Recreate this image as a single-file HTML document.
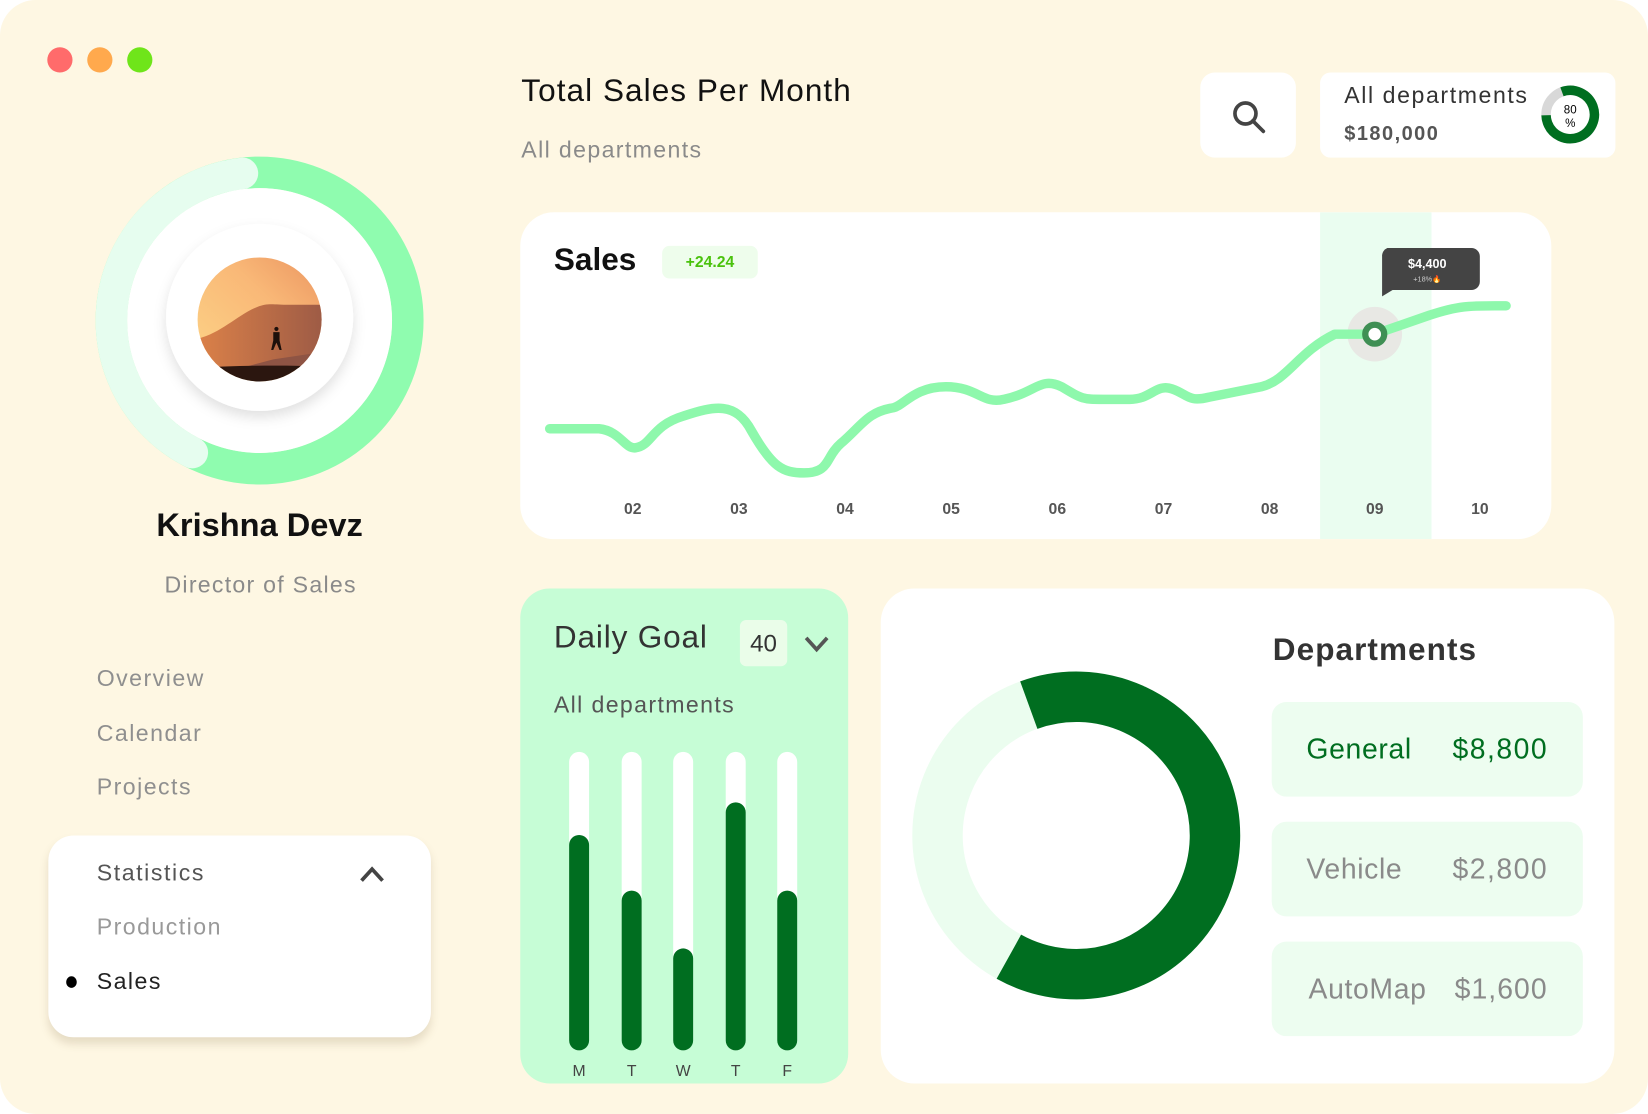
<!DOCTYPE html>
<html><head><meta charset="utf-8"><style>
html,body{margin:0;padding:0;width:1648px;height:1114px;overflow:hidden;background:#fff;font-family:"Liberation Sans",sans-serif}
#s{position:absolute;left:0;top:0;width:1568px;height:1060px;transform:scale(1.05102,1.0509);transform-origin:0 0;background:#fef7e3;border-radius:34px;overflow:hidden}
.a{position:absolute}
.t{position:absolute;white-space:nowrap}
.card{position:absolute;background:#fff}
</style></head><body><div id="s">
<div class="a" style="left:45px;top:45px;width:24px;height:24px;border-radius:50%;background:#ff6b6b"></div>
<div class="a" style="left:83px;top:45px;width:24px;height:24px;border-radius:50%;background:#ffa94d"></div>
<div class="a" style="left:121px;top:45px;width:24px;height:24px;border-radius:50%;background:#6fe51a"></div>

<svg class="a" style="left:0;top:0" width="500" height="500">
<circle cx="247" cy="305" r="141" fill="none" stroke="#8ffcaf" stroke-width="30"/>
<circle cx="247" cy="305" r="141" fill="none" stroke="#e6fdef" stroke-width="30" stroke-dasharray="360 900" stroke-linecap="round" transform="rotate(117 247 305) " />
<circle cx="247" cy="305" r="126" fill="#fff"/>
<defs><filter id="sh" x="-30%" y="-30%" width="160%" height="160%"><feDropShadow dx="0" dy="6" stdDeviation="6" flood-color="#000" flood-opacity="0.12"/></filter>
<linearGradient id="sky" x1="0" y1="1" x2="1" y2="0"><stop offset="0" stop-color="#fdd98a"/><stop offset=".6" stop-color="#f9b877"/><stop offset="1" stop-color="#e88e5c"/></linearGradient>
<linearGradient id="mt" x1="0" y1="0" x2="1" y2="0"><stop offset="0" stop-color="#dd8249"/><stop offset="1" stop-color="#9c5a45"/></linearGradient>
<clipPath id="cp"><circle cx="247" cy="304" r="59"/></clipPath></defs>
<circle cx="247" cy="302" r="89" fill="#fff" filter="url(#sh)"/>
<g clip-path="url(#cp)">
<rect x="180" y="240" width="140" height="130" fill="url(#sky)"/>
<path d="M185 323 C210 318 225 300 245 292 C255 288 260 290 275 290 L310 290 L310 350 L185 350Z" fill="url(#mt)"/>
<path d="M230 350 L260 342 L300 336 L310 338 L310 350Z" fill="#8e5444"/>
<path d="M185 350 C220 348 270 347 310 349 L310 370 L185 370Z" fill="#2b160f"/>
<circle cx="263" cy="313" r="2" fill="#1e100b"/>
<path d="M260 316 h6 v8 l2 9 h-2 l-3 -7 -3 7 h-2 l2 -9Z" fill="#1e100b"/>
</g>
</svg>
<div class="t" style="left:0;width:494px;text-align:center;top:482px;font-size:31px;font-weight:bold;color:#111">Krishna Devz</div>
<div class="t" style="left:0;width:496px;text-align:center;top:544px;font-size:22px;color:#8a8a8a;letter-spacing:1.2px">Director of Sales</div>
<div class="t" style="left:92px;top:633px;font-size:22px;color:#8f8f8f;letter-spacing:1.4px">Overview</div>
<div class="t" style="left:92px;top:685px;font-size:22px;color:#8f8f8f;letter-spacing:1.4px">Calendar</div>
<div class="t" style="left:92px;top:736px;font-size:22px;color:#8f8f8f;letter-spacing:1.4px">Projects</div>
<div class="card" style="left:46px;top:795px;width:364px;height:192px;border-radius:24px;box-shadow:0 6px 8px rgba(120,100,60,.18)"></div>
<div class="t" style="left:92px;top:818px;font-size:22px;color:#555;letter-spacing:1.5px">Statistics</div>
<svg class="a" style="left:340px;top:820px" width="28" height="22"><path d="M4 18 L14 7 L24 18" fill="none" stroke="#444" stroke-width="3.5"/></svg>
<div class="t" style="left:92px;top:869px;font-size:22px;color:#999;letter-spacing:1.4px">Production</div>
<div class="a" style="left:63px;top:929px;width:10px;height:11px;border-radius:50%;background:#000"></div>
<div class="t" style="left:92px;top:921px;font-size:22px;color:#222;letter-spacing:1.4px">Sales</div>

<div class="t" style="left:496px;top:70px;font-size:30px;color:#111;letter-spacing:1px">Total Sales Per Month</div>
<div class="t" style="left:496px;top:130px;font-size:22px;color:#8a8a8a;letter-spacing:1.3px">All departments</div>
<div class="card" style="left:1142px;top:69px;width:91px;height:81px;border-radius:14px"></div>
<svg class="a" style="left:1168px;top:92px" width="40" height="40"><circle cx="17" cy="16" r="10" fill="none" stroke="#444" stroke-width="3.5"/><path d="M24 23 L34 33" stroke="#444" stroke-width="3.5" stroke-linecap="round"/></svg>
<div class="card" style="left:1256px;top:69px;width:281px;height:81px;border-radius:10px"></div>
<div class="t" style="left:1279px;top:78px;font-size:22px;color:#333;letter-spacing:1.5px">All departments</div>
<div class="t" style="left:1279px;top:117px;font-size:19px;font-weight:bold;color:#555;letter-spacing:1.4px">$180,000</div>
<svg class="a" style="left:1464px;top:79px" width="60" height="60"><circle cx="30" cy="30" r="23" fill="none" stroke="#d8d8d8" stroke-width="9"/><circle cx="30" cy="30" r="23" fill="none" stroke="#006e20" stroke-width="9" stroke-dasharray="115.6 200" transform="rotate(-110 30 30)"/>
<text x="30" y="29" font-size="11" text-anchor="middle" font-family="Liberation Sans">80</text><text x="30" y="42" font-size="11" text-anchor="middle" font-family="Liberation Sans">%</text></svg>

<div class="card" style="left:495px;top:202px;width:981px;height:311px;border-radius:32px;overflow:hidden">
<div class="a" style="left:761px;top:0;width:106px;height:311px;background:#eafdf0"></div>
</div>
<div class="t" style="left:527px;top:231px;font-size:30px;font-weight:bold;color:#111">Sales</div>
<div class="a" style="left:630px;top:234px;width:91px;height:31px;border-radius:7px;background:#eefdec"></div>
<div class="t" style="left:630px;width:91px;text-align:center;top:241px;font-size:15px;font-weight:bold;color:#4ac20d">+24.24</div>
<svg class="a" style="left:0;top:0" width="1568" height="520">
<circle cx="1308" cy="318" r="26" fill="#e8e8e4"/>
<path d="M523 408 L570 408 C590 410 595 428 605 426 C620 424 620 405 650 396 C680 386 700 382 715 410 C735 445 745 450 765 450 C790 450 785 435 800 422 C820 405 825 392 850 388 C860 386 870 368 900 368 C930 368 935 385 955 380 C985 374 990 358 1010 368 C1030 380 1030 380 1050 380 L1075 380 C1095 380 1100 365 1115 370 C1130 375 1130 383 1150 378 L1200 368 C1225 362 1235 335 1270 318 L1308 318 L1360 300 C1390 290 1400 291 1433 291" fill="none" stroke="#8ef8ac" stroke-width="9" stroke-linecap="round" stroke-linejoin="round"/>
<circle cx="1308" cy="318" r="9" fill="#fff" stroke="#3f8f54" stroke-width="6"/>
<path d="M1320 236 H1400 a8 8 0 0 1 8 8 V268 a8 8 0 0 1 -8 8 H1325 L1315 282 V244 a8 8 0 0 1 5 -8Z" fill="#444"/>
<text x="1358" y="255" font-size="12" font-weight="bold" fill="#fff" text-anchor="middle" font-family="Liberation Sans">$4,400</text>
<text x="1358" y="268" font-size="7" fill="#ccc" text-anchor="middle" font-family="Liberation Sans">+18%🔥</text>
<g font-size="15" font-weight="bold" fill="#555" text-anchor="middle" font-family="Liberation Sans">
<text x="602" y="489">02</text><text x="703" y="489">03</text><text x="804" y="489">04</text><text x="905" y="489">05</text><text x="1006" y="489">06</text><text x="1107" y="489">07</text><text x="1208" y="489">08</text><text x="1308" y="489">09</text><text x="1408" y="489">10</text></g>
</svg>

<div class="a" style="left:495px;top:560px;width:312px;height:471px;border-radius:28px;background:#c6fdd6"></div>
<div class="t" style="left:527px;top:590px;font-size:30px;color:#333;letter-spacing:0.8px">Daily Goal</div>
<div class="a" style="left:704px;top:590px;width:45px;height:44px;border-radius:6px;background:#eafde9"></div>
<div class="t" style="left:704px;width:45px;text-align:center;top:599px;font-size:23px;color:#333">40</div>
<svg class="a" style="left:763px;top:600px" width="28" height="24"><path d="M4 7 L14 18 L24 7" fill="none" stroke="#555" stroke-width="3.5"/></svg>
<div class="t" style="left:527px;top:658px;font-size:22px;color:#555;letter-spacing:1.3px">All departments</div>
<svg class="a" style="left:520px;top:700px" width="280" height="330">
<g stroke-linecap="round" stroke-width="19">
<path d="M31 25 V290 M81 25 V290 M130 25 V290 M180 25 V290 M229 25 V290" stroke="#fff"/>
<path d="M31 104 V290 M81 157 V290 M130 212 V290 M180 73 V290 M229 157 V290" stroke="#006e20"/></g>
<g font-size="15" fill="#444" text-anchor="middle" font-family="Liberation Sans"><text x="31" y="324">M</text><text x="81" y="324">T</text><text x="130" y="324">W</text><text x="180" y="324">T</text><text x="229" y="324">F</text></g>
</svg>

<div class="card" style="left:838px;top:560px;width:698px;height:471px;border-radius:32px"></div>
<svg class="a" style="left:850px;top:620px" width="350" height="350">
<circle cx="174" cy="175" r="132" fill="none" stroke="#ebfdef" stroke-width="48"/>
<circle cx="174" cy="175" r="132" fill="none" stroke="#006e20" stroke-width="48" stroke-dasharray="527.5 900" transform="rotate(-110 174 175)"/>
</svg>
<div class="t" style="left:1211px;top:602px;font-size:30px;font-weight:bold;color:#333;letter-spacing:1px">Departments</div>
<div class="a" style="left:1210px;top:668px;width:296px;height:90px;border-radius:14px;background:#edfdf0"></div>
<div class="a" style="left:1210px;top:782px;width:296px;height:90px;border-radius:14px;background:#edfdf0"></div>
<div class="a" style="left:1210px;top:896px;width:296px;height:90px;border-radius:14px;background:#edfdf0"></div>
<div class="t" style="left:1243px;top:698px;font-size:27px;color:#006e20;letter-spacing:0.6px">General</div>
<div class="t" style="left:1382px;top:698px;font-size:27px;color:#006e20;letter-spacing:1.4px">$8,800</div>
<div class="t" style="left:1243px;top:812px;font-size:27px;color:#8a8a8a;letter-spacing:0.6px">Vehicle</div>
<div class="t" style="left:1382px;top:812px;font-size:27px;color:#8a8a8a;letter-spacing:1.4px">$2,800</div>
<div class="t" style="left:1245px;top:926px;font-size:27px;color:#8a8a8a;letter-spacing:0.6px">AutoMap</div>
<div class="t" style="left:1384px;top:926px;font-size:27px;color:#8a8a8a;letter-spacing:1px">$1,600</div>
</div></body></html>
